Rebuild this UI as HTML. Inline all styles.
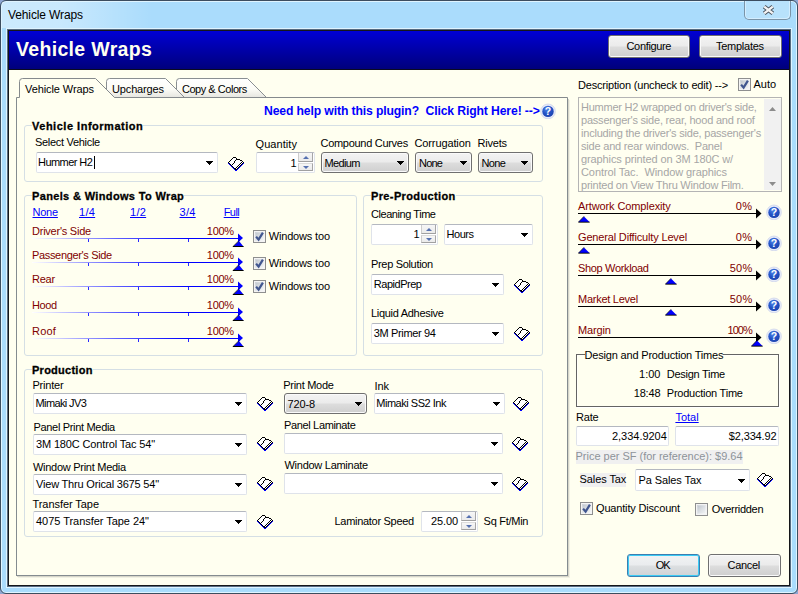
<!DOCTYPE html>
<html><head><meta charset="utf-8"><title>Vehicle Wraps</title>
<style>
html,body{margin:0;padding:0;}
body{width:798px;height:594px;overflow:hidden;background:#8ea6d2;font-family:"Liberation Sans",sans-serif;position:relative;}
#win{position:absolute;left:0;top:0;width:796px;height:592px;border:1px solid #3c4d5f;border-radius:6px;background:#aadcfc;box-shadow:inset 0 0 0 1px #dff4ff;}
#glow{position:absolute;left:2px;top:2px;width:230px;height:26px;background:linear-gradient(90deg,rgba(255,255,255,0.40) 0,rgba(255,255,255,0.36) 60px,rgba(255,255,255,0) 150px);}
#cl{position:absolute;left:8px;top:30px;width:780px;height:554px;border:1px solid #141619;background:#fffff0;box-shadow:0 0 0 1px #566a80,0 0 0 2px #dff4ff;}
#xb{position:absolute;left:744px;top:1px;width:47px;height:19px;border:1px solid #7a94a8;border-top:none;border-radius:0 0 5px 5px;background:#b8e2fc;box-sizing:border-box;box-shadow:inset 1px 0 0 #d4eeff,inset -1px -1px 0 #d4eeff;}
.a,.t,.cb,.dd,.bt,.gb,.ck,.tp,.ta,.fs,.hdr,.sb{position:absolute;box-sizing:border-box;}
.t{white-space:pre;line-height:14px;height:14px;}
.hdr{background:linear-gradient(180deg,#0000d4 0,#0000a8 50%,#00007c 100%);border-bottom:1px solid #0a0a20;}
.cb{background:#fff;border:1px solid #dfe3ea;border-top-color:#b4b8c0;border-radius:2px;}
.dd{border:1px solid #707070;border-radius:3px;background:linear-gradient(180deg,#f3f3f3 0,#ebebeb 48%,#dddddd 52%,#cfcfcf 100%);box-shadow:inset 0 0 0 1px #fafafa;}
.bt{border:1px solid #707070;border-radius:3px;background:linear-gradient(180deg,#f3f3f3 0,#ebebeb 48%,#dddddd 52%,#cfcfcf 100%);box-shadow:inset 0 0 0 1px #fafafa;}
.bt.def{border-color:#3c7fb1;box-shadow:inset 0 0 0 1px #3ccbf4;background:linear-gradient(180deg,#f1f3f4 0,#eaecee 48%,#dcdfe1 52%,#cfd3d6 100%);}
.gb{border:1px solid #d5dfe5;border-radius:3px;}
.tp{border:1px solid #848c90;border-top:none;box-shadow:1px 1px 0 #d6d6ca,2px 2px 0 #f1f1e4;}
.ck{width:13px;height:13px;border:1px solid #8e8f8f;background:linear-gradient(135deg,#b4bbc4 0,#dde1e5 52%,#f9f9f9 100%);box-shadow:inset 0 0 0 1px #f4f4f4,inset 0 0 0 2px rgba(255,255,255,0.25);}
.ta{border:1px solid #b4b4b4;background:#fffff0;}
.sc{position:absolute;right:0;top:1px;bottom:1px;width:17px;background:#f1f1f1;}
.fs{border:1px solid #646464;box-shadow:1px 1px 0 #ffffff, inset 1px 1px 0 #fffffa;}
.sb{width:15px;border:1px solid;border-color:#dcdcdc #a6a6a6 #a0a0a0 #cccccc;background:linear-gradient(180deg,#f6f6f6,#ebebeb);}
</style></head>
<body>
<div id="win"></div>
<div id="glow"></div>
<div id="cl"></div>
<div id="xb"><svg width="13" height="12" viewBox="0 0 13 12" style="position:absolute;left:17px;top:3px"><path d="M2.2 2.6L10.8 9.4M10.8 2.6L2.2 9.4" stroke="#4a525c" stroke-width="4.2" stroke-linecap="butt"/><path d="M2.2 2.6L10.8 9.4M10.8 2.6L2.2 9.4" stroke="#f4f4f4" stroke-width="2.4" stroke-linecap="butt"/></svg></div>
<svg width="0" height="0" style="position:absolute"><defs><g id="bk" shape-rendering="crispEdges"><path d="M5 1h1v1h-1zM6 1h1v1h-1zM7 1h1v1h-1zM4 2h1v1h-1zM5 2h1v1h-1zM6 2h1v1h-1zM7 2h1v1h-1zM3 3h1v1h-1zM4 3h1v1h-1zM5 3h1v1h-1zM6 3h1v1h-1zM8 3h1v1h-1zM9 3h1v1h-1zM10 3h1v1h-1zM11 3h1v1h-1zM2 4h1v1h-1zM3 4h1v1h-1zM4 4h1v1h-1zM5 4h1v1h-1zM7 4h1v1h-1zM8 4h1v1h-1zM9 4h1v1h-1zM10 4h1v1h-1zM11 4h1v1h-1zM12 4h1v1h-1zM13 4h1v1h-1zM1 5h1v1h-1zM2 5h1v1h-1zM3 5h1v1h-1zM4 5h1v1h-1zM5 5h1v1h-1zM7 5h1v1h-1zM8 5h1v1h-1zM9 5h1v1h-1zM10 5h1v1h-1zM11 5h1v1h-1zM12 5h1v1h-1zM14 5h1v1h-1zM2 6h1v1h-1zM3 6h1v1h-1zM4 6h1v1h-1zM6 6h1v1h-1zM7 6h1v1h-1zM8 6h1v1h-1zM9 6h1v1h-1zM10 6h1v1h-1zM11 6h1v1h-1zM13 6h1v1h-1zM3 7h1v1h-1zM5 7h1v1h-1zM6 7h1v1h-1zM7 7h1v1h-1zM8 7h1v1h-1zM9 7h1v1h-1zM10 7h1v1h-1zM12 7h1v1h-1zM4 8h1v1h-1zM5 8h1v1h-1zM6 8h1v1h-1zM7 8h1v1h-1zM8 8h1v1h-1zM9 8h1v1h-1zM11 8h1v1h-1zM5 9h1v1h-1zM6 9h1v1h-1zM7 9h1v1h-1zM8 9h1v1h-1zM10 9h1v1h-1zM6 10h1v1h-1zM7 10h1v1h-1zM9 10h1v1h-1zM8 11h1v1h-1z" fill="#fff"/><path d="M0 6h1v1h-1zM1 7h1v1h-1zM2 8h1v1h-1zM3 9h1v1h-1zM4 10h1v1h-1zM5 11h1v1h-1zM6 12h1v1h-1zM7 13h1v1h-1zM8 13h1v1h-1zM9 12h1v1h-1zM10 11h1v1h-1zM11 10h1v1h-1zM12 9h1v1h-1zM13 8h1v1h-1zM14 7h1v1h-1zM15 6h1v1h-1z" fill="#0000ff"/><path d="M5 0h1v1h-1zM6 0h1v1h-1zM7 0h1v1h-1zM8 1h1v1h-1zM9 2h1v1h-1zM10 2h1v1h-1zM11 2h1v1h-1zM12 3h1v1h-1zM13 3h1v1h-1zM14 4h1v1h-1zM15 5h1v1h-1zM14 6h1v1h-1zM13 7h1v1h-1zM12 8h1v1h-1zM11 9h1v1h-1zM10 10h1v1h-1zM9 11h1v1h-1zM8 12h1v1h-1zM4 1h1v1h-1zM3 2h1v1h-1zM2 3h1v1h-1zM1 4h1v1h-1zM0 5h1v1h-1zM1 6h1v1h-1zM2 7h1v1h-1zM3 8h1v1h-1zM4 9h1v1h-1zM5 10h1v1h-1zM6 11h1v1h-1zM7 12h1v1h-1zM8 2h1v1h-1zM7 3h1v1h-1zM6 4h1v1h-1zM6 5h1v1h-1zM5 6h1v1h-1zM4 7h1v1h-1zM13 5h1v1h-1zM12 6h1v1h-1zM11 7h1v1h-1zM10 8h1v1h-1zM9 9h1v1h-1zM8 10h1v1h-1zM7 11h1v1h-1z" fill="#000"/></g></defs></svg>
<span class="t" style="left:8.00px;top:8.10px;font-size:12px;color:#000;letter-spacing:-0.118px;">Vehicle Wraps</span>
<div class="hdr" style="left:9px;top:31px;width:780px;height:39px;"></div>
<span class="t" style="left:16.00px;top:41.60px;font-size:19.5px;color:#fffff0;letter-spacing:0.331px;font-weight:bold;">Vehicle Wraps</span>
<div class="bt" style="left:608px;top:35px;width:82px;height:23px;"></div>
<span class="t" style="left:626.50px;top:38.60px;font-size:11px;color:#000;letter-spacing:-0.340px;">Configure</span>
<div class="bt" style="left:699px;top:35px;width:83px;height:23px;"></div>
<span class="t" style="left:715.90px;top:38.60px;font-size:11px;color:#000;letter-spacing:-0.239px;">Templates</span>
<svg class="a" style="left:14px;top:76px" width="560" height="24" viewBox="14 76 560 24">
<defs><linearGradient id="tg" x1="0" y1="0" x2="0" y2="1"><stop offset="0" stop-color="#ffffff"/><stop offset="0.55" stop-color="#fcfcf6"/><stop offset="1" stop-color="#e6e6e0"/></linearGradient></defs>
<path d="M176.5 97.5V81.5Q176.500 78.500 179.500 78.500H247.500L266.500 97.500Z" fill="url(#tg)" stroke="#8a8f92"/>
<path d="M106.500 97.500V81.500Q106.500 78.500 109.500 78.500H165.500L184.500 97.500Z" fill="url(#tg)" stroke="#8a8f92"/>
<path d="M16.500 100V97.500H19.500V81.500Q19.500 78.500 22.500 78.500H95.500L114.500 97.500H567.500V100" fill="#fffff0" stroke="#858a8d"/>
</svg>
<div class="tp" style="left:16px;top:98px;width:552px;height:478px;"></div>
<span class="t" style="left:25.00px;top:82.10px;font-size:11px;color:#000;letter-spacing:-0.088px;">Vehicle Wraps</span>
<span class="t" style="left:112.00px;top:82.10px;font-size:11px;color:#000;letter-spacing:-0.140px;">Upcharges</span>
<span class="t" style="left:182.00px;top:82.10px;font-size:11px;color:#000;letter-spacing:-0.473px;">Copy &amp; Colors</span>
<span class="t" style="left:264.00px;top:104.00px;font-size:12.2px;color:#0000ff;letter-spacing:-0.127px;font-weight:bold;">Need help with this plugin?&nbsp; Click Right Here! --&gt;</span>
<svg class="a" style="left:540px;top:103px" width="16" height="16" viewBox="0 0 16 16"><defs><radialGradient id="hg" cx="0.4" cy="0.3" r="0.8"><stop offset="0" stop-color="#4f86e8"/><stop offset="0.5" stop-color="#2453c6"/><stop offset="1" stop-color="#1a3ea8"/></radialGradient></defs><circle cx="8" cy="8.4" r="7.4" fill="#e6eaf8" stroke="#ccd3ea" stroke-width="0.7"/><circle cx="8" cy="8.4" r="5.7" fill="url(#hg)"/><text x="8" y="12" font-family="Liberation Sans" font-weight="bold" font-size="10.5" fill="#fff" text-anchor="middle">?</text></svg>
<div class="gb" style="left:24px;top:125px;width:519px;height:57px;"></div>
<span class="t" style="left:32.00px;top:119.10px;font-size:11px;color:#000;letter-spacing:0.516px;font-weight:bold;-webkit-text-stroke:0.3px;background:#fffff0;">Vehicle Information</span>
<div class="gb" style="left:24px;top:195px;width:333px;height:161px;"></div>
<span class="t" style="left:32.00px;top:189.10px;font-size:11px;color:#000;letter-spacing:0.352px;font-weight:bold;-webkit-text-stroke:0.3px;background:#fffff0;">Panels &amp; Windows To Wrap</span>
<div class="gb" style="left:363px;top:195px;width:180px;height:161px;"></div>
<span class="t" style="left:371.00px;top:189.10px;font-size:11px;color:#000;letter-spacing:0.374px;font-weight:bold;-webkit-text-stroke:0.3px;background:#fffff0;">Pre-Production</span>
<div class="gb" style="left:24px;top:369px;width:519px;height:168px;"></div>
<span class="t" style="left:32.00px;top:363.10px;font-size:11px;color:#000;letter-spacing:0.258px;font-weight:bold;-webkit-text-stroke:0.3px;background:#fffff0;">Production</span>
<span class="t" style="left:35.00px;top:135.10px;font-size:11px;color:#000;letter-spacing:-0.303px;">Select Vehicle</span>
<div class="cb" style="left:36px;top:152px;width:182px;height:21px;"><svg style="position:absolute;right:4px;top:7.5px" width="7" height="4" viewBox="0 0 7 4" shape-rendering="crispEdges"><path d="M0 0H7L3.5 4Z" fill="#000"/></svg></div>
<span class="t" style="left:38.00px;top:155.00px;font-size:11px;color:#000;letter-spacing:-0.563px;">Hummer H2</span>
<div class="a" style="left:94px;top:156px;width:1px;height:13px;background:#000"></div>
<svg class="a" style="left:228px;top:157px" width="16" height="14" viewBox="0 0 16 14"><use href="#bk"/></svg>
<span class="t" style="left:255.50px;top:136.80px;font-size:11px;color:#000;letter-spacing:0.072px;">Quantity</span>
<div class="cb" style="left:256px;top:152px;width:59px;height:21px;"><div class="sb" style="right:1px;top:0px;height:9px;border-top:none"><svg width="6" height="3" viewBox="0 0 6 3" style="position:absolute;left:3.5px;top:3px"><path d="M0 3H6L3 0Z" fill="#5570b0"/></svg></div><div class="sb" style="right:1px;top:10px;height:8px"><svg width="6" height="3" viewBox="0 0 6 3" style="position:absolute;left:3.5px;top:2px"><path d="M0 0H6L3 3Z" fill="#5570b0"/></svg></div></div>
<span class="t" style="left:290.50px;top:155.60px;font-size:11px;color:#000;letter-spacing:0.000px;">1</span>
<span class="t" style="left:320.50px;top:135.60px;font-size:11px;color:#000;letter-spacing:-0.290px;">Compound Curves</span>
<div class="dd" style="left:321px;top:152px;width:88px;height:21px;"><svg style="position:absolute;right:4px;top:8px" width="7" height="4" viewBox="0 0 7 4" shape-rendering="crispEdges"><path d="M0 0H7L3.5 4Z" fill="#000"/></svg></div>
<span class="t" style="left:324.50px;top:155.80px;font-size:11px;color:#000;letter-spacing:-0.658px;">Medium</span>
<span class="t" style="left:414.50px;top:135.60px;font-size:11px;color:#000;letter-spacing:-0.121px;">Corrugation</span>
<div class="dd" style="left:415px;top:152px;width:57px;height:21px;"><svg style="position:absolute;right:4px;top:8px" width="7" height="4" viewBox="0 0 7 4" shape-rendering="crispEdges"><path d="M0 0H7L3.5 4Z" fill="#000"/></svg></div>
<span class="t" style="left:419.00px;top:155.80px;font-size:11px;color:#000;letter-spacing:-0.799px;">None</span>
<span class="t" style="left:477.50px;top:135.60px;font-size:11px;color:#000;letter-spacing:-0.193px;">Rivets</span>
<div class="dd" style="left:478px;top:152px;width:55px;height:21px;"><svg style="position:absolute;right:4px;top:8px" width="7" height="4" viewBox="0 0 7 4" shape-rendering="crispEdges"><path d="M0 0H7L3.5 4Z" fill="#000"/></svg></div>
<span class="t" style="left:481.50px;top:155.80px;font-size:11px;color:#000;letter-spacing:-0.656px;">None</span>
<span class="t" style="left:32.50px;top:205.10px;font-size:11px;color:#0000ff;letter-spacing:-0.227px;text-decoration:underline;">None</span>
<span class="t" style="left:79.00px;top:205.10px;font-size:11px;color:#0000ff;letter-spacing:0.284px;text-decoration:underline;">1/4</span>
<span class="t" style="left:130.00px;top:205.10px;font-size:11px;color:#0000ff;letter-spacing:0.284px;text-decoration:underline;">1/2</span>
<span class="t" style="left:179.50px;top:205.10px;font-size:11px;color:#0000ff;letter-spacing:0.284px;text-decoration:underline;">3/4</span>
<span class="t" style="left:223.70px;top:205.10px;font-size:11px;color:#0000ff;letter-spacing:-0.550px;text-decoration:underline;">Full</span>
<span class="t" style="left:32.00px;top:224.10px;font-size:11px;color:#800000;letter-spacing:-0.240px;">Driver's Side</span>
<span class="t" style="left:206.80px;top:224.10px;font-size:11px;color:#800000;letter-spacing:-0.266px;">100%</span>
<div class="a" style="left:32px;top:238px;width:207px;height:1px;background:linear-gradient(90deg,#ffffff 0,#b8b8ff 18%,#5a5aff 42%,#0000ff 75%)"></div>
<div class="a" style="left:88px;top:239px;width:1px;height:3px;background:#2a2aff"></div>
<div class="a" style="left:138px;top:239px;width:1px;height:3px;background:#2a2aff"></div>
<div class="a" style="left:188px;top:239px;width:1px;height:3px;background:#2a2aff"></div>
<svg class="a" style="left:232px;top:233px" width="12" height="14" viewBox="0 0 12 14"><path d="M6 0.5L11 5L6 9.5Z" fill="#0000ff"/><path d="M7 8L1.2 13.5H11.5Z" fill="#0000ff"/><path d="M0.8 13.5H11.6" stroke="#000" stroke-width="1"/><path d="M7 7.6L1.6 13" stroke="#000" stroke-width="0.8"/></svg>
<span class="t" style="left:32.00px;top:248.10px;font-size:11px;color:#800000;letter-spacing:-0.339px;">Passenger's Side</span>
<span class="t" style="left:206.80px;top:248.10px;font-size:11px;color:#800000;letter-spacing:-0.266px;">100%</span>
<div class="a" style="left:32px;top:262px;width:207px;height:1px;background:linear-gradient(90deg,#ffffff 0,#b8b8ff 18%,#5a5aff 42%,#0000ff 75%)"></div>
<div class="a" style="left:88px;top:263px;width:1px;height:3px;background:#2a2aff"></div>
<div class="a" style="left:138px;top:263px;width:1px;height:3px;background:#2a2aff"></div>
<div class="a" style="left:188px;top:263px;width:1px;height:3px;background:#2a2aff"></div>
<svg class="a" style="left:232px;top:257px" width="12" height="14" viewBox="0 0 12 14"><path d="M6 0.5L11 5L6 9.5Z" fill="#0000ff"/><path d="M7 8L1.2 13.5H11.5Z" fill="#0000ff"/><path d="M0.8 13.5H11.6" stroke="#000" stroke-width="1"/><path d="M7 7.6L1.6 13" stroke="#000" stroke-width="0.8"/></svg>
<span class="t" style="left:32.00px;top:272.10px;font-size:11px;color:#800000;letter-spacing:-0.240px;">Rear</span>
<span class="t" style="left:206.80px;top:272.10px;font-size:11px;color:#800000;letter-spacing:-0.266px;">100%</span>
<div class="a" style="left:32px;top:286px;width:207px;height:1px;background:linear-gradient(90deg,#ffffff 0,#b8b8ff 18%,#5a5aff 42%,#0000ff 75%)"></div>
<div class="a" style="left:88px;top:287px;width:1px;height:3px;background:#2a2aff"></div>
<div class="a" style="left:138px;top:287px;width:1px;height:3px;background:#2a2aff"></div>
<div class="a" style="left:188px;top:287px;width:1px;height:3px;background:#2a2aff"></div>
<svg class="a" style="left:232px;top:281px" width="12" height="14" viewBox="0 0 12 14"><path d="M6 0.5L11 5L6 9.5Z" fill="#0000ff"/><path d="M7 8L1.2 13.5H11.5Z" fill="#0000ff"/><path d="M0.8 13.5H11.6" stroke="#000" stroke-width="1"/><path d="M7 7.6L1.6 13" stroke="#000" stroke-width="0.8"/></svg>
<span class="t" style="left:32.00px;top:298.10px;font-size:11px;color:#800000;letter-spacing:-0.370px;">Hood</span>
<span class="t" style="left:206.80px;top:298.10px;font-size:11px;color:#800000;letter-spacing:-0.266px;">100%</span>
<div class="a" style="left:32px;top:312px;width:207px;height:1px;background:linear-gradient(90deg,#ffffff 0,#b8b8ff 18%,#5a5aff 42%,#0000ff 75%)"></div>
<div class="a" style="left:88px;top:313px;width:1px;height:3px;background:#2a2aff"></div>
<div class="a" style="left:138px;top:313px;width:1px;height:3px;background:#2a2aff"></div>
<div class="a" style="left:188px;top:313px;width:1px;height:3px;background:#2a2aff"></div>
<svg class="a" style="left:232px;top:307px" width="12" height="14" viewBox="0 0 12 14"><path d="M6 0.5L11 5L6 9.5Z" fill="#0000ff"/><path d="M7 8L1.2 13.5H11.5Z" fill="#0000ff"/><path d="M0.8 13.5H11.6" stroke="#000" stroke-width="1"/><path d="M7 7.6L1.6 13" stroke="#000" stroke-width="0.8"/></svg>
<span class="t" style="left:32.00px;top:324.10px;font-size:11px;color:#800000;letter-spacing:0.219px;">Roof</span>
<span class="t" style="left:206.80px;top:324.10px;font-size:11px;color:#800000;letter-spacing:-0.266px;">100%</span>
<div class="a" style="left:32px;top:338px;width:207px;height:1px;background:linear-gradient(90deg,#ffffff 0,#b8b8ff 18%,#5a5aff 42%,#0000ff 75%)"></div>
<div class="a" style="left:88px;top:339px;width:1px;height:3px;background:#2a2aff"></div>
<div class="a" style="left:138px;top:339px;width:1px;height:3px;background:#2a2aff"></div>
<div class="a" style="left:188px;top:339px;width:1px;height:3px;background:#2a2aff"></div>
<svg class="a" style="left:232px;top:333px" width="12" height="14" viewBox="0 0 12 14"><path d="M6 0.5L11 5L6 9.5Z" fill="#0000ff"/><path d="M7 8L1.2 13.5H11.5Z" fill="#0000ff"/><path d="M0.8 13.5H11.6" stroke="#000" stroke-width="1"/><path d="M7 7.6L1.6 13" stroke="#000" stroke-width="0.8"/></svg>
<div class="ck" style="left:253px;top:230px"><svg width="13" height="13" viewBox="0 0 13 13" style="position:absolute;left:-1px;top:-1px"><path d="M3.1 6.6L5.6 9.7L9.9 2.7" stroke="#41568f" stroke-width="2.2" fill="none" stroke-linejoin="miter"/></svg></div>
<span class="t" style="left:268.70px;top:229.40px;font-size:11px;color:#000;letter-spacing:-0.159px;">Windows too</span>
<div class="ck" style="left:253px;top:257px"><svg width="13" height="13" viewBox="0 0 13 13" style="position:absolute;left:-1px;top:-1px"><path d="M3.1 6.6L5.6 9.7L9.9 2.7" stroke="#41568f" stroke-width="2.2" fill="none" stroke-linejoin="miter"/></svg></div>
<span class="t" style="left:268.70px;top:256.40px;font-size:11px;color:#000;letter-spacing:-0.159px;">Windows too</span>
<div class="ck" style="left:253px;top:280px"><svg width="13" height="13" viewBox="0 0 13 13" style="position:absolute;left:-1px;top:-1px"><path d="M3.1 6.6L5.6 9.7L9.9 2.7" stroke="#41568f" stroke-width="2.2" fill="none" stroke-linejoin="miter"/></svg></div>
<span class="t" style="left:268.70px;top:279.40px;font-size:11px;color:#000;letter-spacing:-0.159px;">Windows too</span>
<span class="t" style="left:371.00px;top:206.85px;font-size:11px;color:#000;letter-spacing:-0.445px;">Cleaning Time</span>
<div class="cb" style="left:371px;top:224px;width:67px;height:21px;"><div class="sb" style="right:1px;top:0px;height:9px;border-top:none"><svg width="6" height="3" viewBox="0 0 6 3" style="position:absolute;left:3.5px;top:3px"><path d="M0 3H6L3 0Z" fill="#5570b0"/></svg></div><div class="sb" style="right:1px;top:10px;height:8px"><svg width="6" height="3" viewBox="0 0 6 3" style="position:absolute;left:3.5px;top:2px"><path d="M0 0H6L3 3Z" fill="#5570b0"/></svg></div></div>
<span class="t" style="left:413.50px;top:227.40px;font-size:11px;color:#000;letter-spacing:0.000px;">1</span>
<div class="cb" style="left:444px;top:224px;width:89px;height:21px;"><svg style="position:absolute;right:4px;top:7.5px" width="7" height="4" viewBox="0 0 7 4" shape-rendering="crispEdges"><path d="M0 0H7L3.5 4Z" fill="#000"/></svg></div>
<span class="t" style="left:446.50px;top:227.40px;font-size:11px;color:#000;letter-spacing:-0.465px;">Hours</span>
<span class="t" style="left:371.00px;top:256.85px;font-size:11px;color:#000;letter-spacing:-0.323px;">Prep Solution</span>
<div class="cb" style="left:371px;top:274px;width:133px;height:21px;"><svg style="position:absolute;right:4px;top:7.5px" width="7" height="4" viewBox="0 0 7 4" shape-rendering="crispEdges"><path d="M0 0H7L3.5 4Z" fill="#000"/></svg></div>
<span class="t" style="left:373.75px;top:277.40px;font-size:11px;color:#000;letter-spacing:-0.467px;">RapidPrep</span>
<svg class="a" style="left:514px;top:279px" width="16" height="14" viewBox="0 0 16 14"><use href="#bk"/></svg>
<span class="t" style="left:371.00px;top:305.60px;font-size:11px;color:#000;letter-spacing:-0.297px;">Liquid Adhesive</span>
<div class="cb" style="left:371px;top:323px;width:133px;height:21px;"><svg style="position:absolute;right:4px;top:7.5px" width="7" height="4" viewBox="0 0 7 4" shape-rendering="crispEdges"><path d="M0 0H7L3.5 4Z" fill="#000"/></svg></div>
<span class="t" style="left:373.75px;top:326.40px;font-size:11px;color:#000;letter-spacing:-0.349px;">3M Primer 94</span>
<svg class="a" style="left:514px;top:327px" width="16" height="14" viewBox="0 0 16 14"><use href="#bk"/></svg>
<span class="t" style="left:32.50px;top:378.10px;font-size:11px;color:#000;letter-spacing:-0.215px;">Printer</span>
<div class="cb" style="left:33px;top:393px;width:214px;height:21px;"><svg style="position:absolute;right:4px;top:7.5px" width="7" height="4" viewBox="0 0 7 4" shape-rendering="crispEdges"><path d="M0 0H7L3.5 4Z" fill="#000"/></svg></div>
<span class="t" style="left:35.50px;top:396.10px;font-size:11px;color:#000;letter-spacing:-0.615px;">Mimaki JV3</span>
<svg class="a" style="left:257px;top:397px" width="16" height="14" viewBox="0 0 16 14"><use href="#bk"/></svg>
<span class="t" style="left:283.25px;top:378.10px;font-size:11px;color:#000;letter-spacing:-0.283px;">Print Mode</span>
<div class="dd" style="left:284px;top:393px;width:83px;height:21px;"><svg style="position:absolute;right:4px;top:8px" width="7" height="4" viewBox="0 0 7 4" shape-rendering="crispEdges"><path d="M0 0H7L3.5 4Z" fill="#000"/></svg></div>
<span class="t" style="left:287.50px;top:396.80px;font-size:11px;color:#000;letter-spacing:-0.140px;">720-8</span>
<span class="t" style="left:374.50px;top:378.85px;font-size:11px;color:#000;letter-spacing:-0.069px;">Ink</span>
<div class="cb" style="left:374px;top:393px;width:131px;height:21px;"><svg style="position:absolute;right:4px;top:7.5px" width="7" height="4" viewBox="0 0 7 4" shape-rendering="crispEdges"><path d="M0 0H7L3.5 4Z" fill="#000"/></svg></div>
<span class="t" style="left:376.25px;top:396.10px;font-size:11px;color:#000;letter-spacing:-0.475px;">Mimaki SS2 Ink</span>
<svg class="a" style="left:513px;top:397px" width="16" height="14" viewBox="0 0 16 14"><use href="#bk"/></svg>
<span class="t" style="left:33.50px;top:419.85px;font-size:11px;color:#000;letter-spacing:-0.322px;">Panel Print Media</span>
<div class="cb" style="left:33px;top:434px;width:214px;height:21px;"><svg style="position:absolute;right:4px;top:7.5px" width="7" height="4" viewBox="0 0 7 4" shape-rendering="crispEdges"><path d="M0 0H7L3.5 4Z" fill="#000"/></svg></div>
<span class="t" style="left:36.00px;top:437.40px;font-size:11px;color:#000;letter-spacing:-0.147px;">3M 180C Control Tac 54"</span>
<svg class="a" style="left:257px;top:437px" width="16" height="14" viewBox="0 0 16 14"><use href="#bk"/></svg>
<span class="t" style="left:284.00px;top:418.00px;font-size:11px;color:#000;letter-spacing:-0.347px;">Panel Laminate</span>
<div class="cb" style="left:284px;top:433px;width:219px;height:21px;"><svg style="position:absolute;right:4px;top:7.5px" width="7" height="4" viewBox="0 0 7 4" shape-rendering="crispEdges"><path d="M0 0H7L3.5 4Z" fill="#000"/></svg></div>
<svg class="a" style="left:512px;top:437px" width="16" height="14" viewBox="0 0 16 14"><use href="#bk"/></svg>
<span class="t" style="left:33.00px;top:460.40px;font-size:11px;color:#000;letter-spacing:-0.275px;">Window Print Media</span>
<div class="cb" style="left:33px;top:474px;width:214px;height:21px;"><svg style="position:absolute;right:4px;top:7.5px" width="7" height="4" viewBox="0 0 7 4" shape-rendering="crispEdges"><path d="M0 0H7L3.5 4Z" fill="#000"/></svg></div>
<span class="t" style="left:36.00px;top:476.90px;font-size:11px;color:#000;letter-spacing:-0.188px;">View Thru Orical 3675 54"</span>
<svg class="a" style="left:257px;top:477px" width="16" height="14" viewBox="0 0 16 14"><use href="#bk"/></svg>
<span class="t" style="left:284.50px;top:458.10px;font-size:11px;color:#000;letter-spacing:-0.271px;">Window Laminate</span>
<div class="cb" style="left:284px;top:473px;width:219px;height:21px;"><svg style="position:absolute;right:4px;top:7.5px" width="7" height="4" viewBox="0 0 7 4" shape-rendering="crispEdges"><path d="M0 0H7L3.5 4Z" fill="#000"/></svg></div>
<svg class="a" style="left:512px;top:477px" width="16" height="14" viewBox="0 0 16 14"><use href="#bk"/></svg>
<span class="t" style="left:32.50px;top:497.10px;font-size:11px;color:#000;letter-spacing:-0.060px;">Transfer Tape</span>
<div class="cb" style="left:33px;top:511px;width:214px;height:21px;"><svg style="position:absolute;right:4px;top:7.5px" width="7" height="4" viewBox="0 0 7 4" shape-rendering="crispEdges"><path d="M0 0H7L3.5 4Z" fill="#000"/></svg></div>
<span class="t" style="left:36.00px;top:514.40px;font-size:11px;color:#000;letter-spacing:-0.036px;">4075 Transfer Tape 24"</span>
<svg class="a" style="left:257px;top:515px" width="16" height="14" viewBox="0 0 16 14"><use href="#bk"/></svg>
<span class="t" style="left:334.50px;top:514.10px;font-size:11px;color:#000;letter-spacing:-0.295px;">Laminator Speed</span>
<div class="cb" style="left:421px;top:511px;width:57px;height:21px;"><div class="sb" style="right:1px;top:0px;height:9px;border-top:none"><svg width="6" height="3" viewBox="0 0 6 3" style="position:absolute;left:3.5px;top:3px"><path d="M0 3H6L3 0Z" fill="#5570b0"/></svg></div><div class="sb" style="right:1px;top:10px;height:8px"><svg width="6" height="3" viewBox="0 0 6 3" style="position:absolute;left:3.5px;top:2px"><path d="M0 0H6L3 3Z" fill="#5570b0"/></svg></div></div>
<span class="t" style="left:431.00px;top:514.40px;font-size:11px;color:#000;letter-spacing:-0.116px;">25.00</span>
<span class="t" style="left:483.60px;top:514.10px;font-size:11px;color:#000;letter-spacing:-0.278px;">Sq Ft/Min</span>
<span class="t" style="left:578.00px;top:77.60px;font-size:11px;color:#000;letter-spacing:-0.191px;">Description (uncheck to edit) --&gt;</span>
<div class="ck" style="left:738px;top:78px"><svg width="13" height="13" viewBox="0 0 13 13" style="position:absolute;left:-1px;top:-1px"><path d="M3.1 6.6L5.6 9.7L9.9 2.7" stroke="#41568f" stroke-width="2.2" fill="none" stroke-linejoin="miter"/></svg></div>
<span class="t" style="left:753.50px;top:77.40px;font-size:11px;color:#000;letter-spacing:-0.036px;">Auto</span>
<div class="ta" style="left:578px;top:97px;width:204px;height:95px;"><div class="sc"><svg width="7" height="4" viewBox="0 0 7 4" style="position:absolute;left:5px;top:8px"><path d="M0 4H7L3.5 0Z" fill="#8c8c8c"/></svg><svg width="7" height="4" viewBox="0 0 7 4" style="position:absolute;left:5px;top:83px"><path d="M0 0H7L3.5 4Z" fill="#8c8c8c"/></svg></div></div>
<span class="t" style="left:581.00px;top:99.80px;font-size:11px;color:#a6a6a6;letter-spacing:-0.248px;">Hummer H2 wrapped on driver's side,</span>
<span class="t" style="left:581.00px;top:112.77px;font-size:11px;color:#a6a6a6;letter-spacing:-0.206px;">passenger's side, rear, hood and roof</span>
<span class="t" style="left:581.00px;top:125.74px;font-size:11px;color:#a6a6a6;letter-spacing:-0.208px;">including the driver's side, passenger's</span>
<span class="t" style="left:581.00px;top:138.71px;font-size:11px;color:#a6a6a6;letter-spacing:-0.201px;">side and rear windows.&nbsp; Panel</span>
<span class="t" style="left:581.00px;top:151.68px;font-size:11px;color:#a6a6a6;letter-spacing:-0.112px;">graphics printed on 3M 180C w/</span>
<span class="t" style="left:581.00px;top:164.65px;font-size:11px;color:#a6a6a6;letter-spacing:-0.083px;">Control Tac.&nbsp; Window graphics</span>
<span class="t" style="left:581.00px;top:177.62px;font-size:11px;color:#a6a6a6;letter-spacing:-0.228px;">printed on View Thru Window Film.</span>
<span class="t" style="left:578.00px;top:199.10px;font-size:11px;color:#800000;letter-spacing:-0.114px;">Artwork Complexity</span>
<span class="t" style="left:735.70px;top:199.10px;font-size:11px;color:#800000;letter-spacing:0.468px;">0%</span>
<div class="a" style="left:578px;top:213px;width:179px;height:1px;background:#000"></div>
<svg class="a" style="left:756px;top:208px" width="6" height="11" viewBox="0 0 6 11"><path d="M0 0.5L5.5 5.5L0 10.5Z" fill="#000"/></svg>
<svg class="a" style="left:577.5px;top:215.6px" width="12" height="7" viewBox="0 0 12 7"><path d="M6 0.5L0.5 6H11.5Z" fill="#0000ff"/><path d="M0.3 6.2H11.7" stroke="#000" stroke-width="0.9"/><path d="M6 0.3L0.8 5.8" stroke="#000" stroke-width="0.7"/></svg>
<svg class="a" style="left:766px;top:204px" width="16" height="16" viewBox="0 0 16 16"><defs><radialGradient id="hg" cx="0.4" cy="0.3" r="0.8"><stop offset="0" stop-color="#4f86e8"/><stop offset="0.5" stop-color="#2453c6"/><stop offset="1" stop-color="#1a3ea8"/></radialGradient></defs><circle cx="8" cy="8.4" r="7.4" fill="#e6eaf8" stroke="#ccd3ea" stroke-width="0.7"/><circle cx="8" cy="8.4" r="5.7" fill="url(#hg)"/><text x="8" y="12" font-family="Liberation Sans" font-weight="bold" font-size="10.5" fill="#fff" text-anchor="middle">?</text></svg>
<span class="t" style="left:578.00px;top:230.10px;font-size:11px;color:#800000;letter-spacing:-0.166px;">General Difficulty Level</span>
<span class="t" style="left:735.70px;top:230.10px;font-size:11px;color:#800000;letter-spacing:0.468px;">0%</span>
<div class="a" style="left:578px;top:244px;width:179px;height:1px;background:#000"></div>
<svg class="a" style="left:756px;top:239px" width="6" height="11" viewBox="0 0 6 11"><path d="M0 0.5L5.5 5.5L0 10.5Z" fill="#000"/></svg>
<svg class="a" style="left:577.5px;top:246.6px" width="12" height="7" viewBox="0 0 12 7"><path d="M6 0.5L0.5 6H11.5Z" fill="#0000ff"/><path d="M0.3 6.2H11.7" stroke="#000" stroke-width="0.9"/><path d="M6 0.3L0.8 5.8" stroke="#000" stroke-width="0.7"/></svg>
<svg class="a" style="left:766px;top:235px" width="16" height="16" viewBox="0 0 16 16"><defs><radialGradient id="hg" cx="0.4" cy="0.3" r="0.8"><stop offset="0" stop-color="#4f86e8"/><stop offset="0.5" stop-color="#2453c6"/><stop offset="1" stop-color="#1a3ea8"/></radialGradient></defs><circle cx="8" cy="8.4" r="7.4" fill="#e6eaf8" stroke="#ccd3ea" stroke-width="0.7"/><circle cx="8" cy="8.4" r="5.7" fill="url(#hg)"/><text x="8" y="12" font-family="Liberation Sans" font-weight="bold" font-size="10.5" fill="#fff" text-anchor="middle">?</text></svg>
<span class="t" style="left:578.00px;top:261.10px;font-size:11px;color:#800000;letter-spacing:-0.340px;">Shop Workload</span>
<span class="t" style="left:729.75px;top:261.10px;font-size:11px;color:#800000;letter-spacing:0.214px;">50%</span>
<div class="a" style="left:578px;top:275px;width:179px;height:1px;background:#000"></div>
<svg class="a" style="left:756px;top:270px" width="6" height="11" viewBox="0 0 6 11"><path d="M0 0.5L5.5 5.5L0 10.5Z" fill="#000"/></svg>
<svg class="a" style="left:664.5px;top:277.6px" width="12" height="7" viewBox="0 0 12 7"><path d="M6 0.5L0.5 6H11.5Z" fill="#0000ff"/><path d="M0.3 6.2H11.7" stroke="#000" stroke-width="0.9"/><path d="M6 0.3L0.8 5.8" stroke="#000" stroke-width="0.7"/></svg>
<svg class="a" style="left:766px;top:266px" width="16" height="16" viewBox="0 0 16 16"><defs><radialGradient id="hg" cx="0.4" cy="0.3" r="0.8"><stop offset="0" stop-color="#4f86e8"/><stop offset="0.5" stop-color="#2453c6"/><stop offset="1" stop-color="#1a3ea8"/></radialGradient></defs><circle cx="8" cy="8.4" r="7.4" fill="#e6eaf8" stroke="#ccd3ea" stroke-width="0.7"/><circle cx="8" cy="8.4" r="5.7" fill="url(#hg)"/><text x="8" y="12" font-family="Liberation Sans" font-weight="bold" font-size="10.5" fill="#fff" text-anchor="middle">?</text></svg>
<span class="t" style="left:578.00px;top:292.10px;font-size:11px;color:#800000;letter-spacing:-0.258px;">Market Level</span>
<span class="t" style="left:729.75px;top:292.10px;font-size:11px;color:#800000;letter-spacing:0.214px;">50%</span>
<div class="a" style="left:578px;top:306px;width:179px;height:1px;background:#000"></div>
<svg class="a" style="left:756px;top:301px" width="6" height="11" viewBox="0 0 6 11"><path d="M0 0.5L5.5 5.5L0 10.5Z" fill="#000"/></svg>
<svg class="a" style="left:664.5px;top:308.6px" width="12" height="7" viewBox="0 0 12 7"><path d="M6 0.5L0.5 6H11.5Z" fill="#0000ff"/><path d="M0.3 6.2H11.7" stroke="#000" stroke-width="0.9"/><path d="M6 0.3L0.8 5.8" stroke="#000" stroke-width="0.7"/></svg>
<svg class="a" style="left:766px;top:297px" width="16" height="16" viewBox="0 0 16 16"><defs><radialGradient id="hg" cx="0.4" cy="0.3" r="0.8"><stop offset="0" stop-color="#4f86e8"/><stop offset="0.5" stop-color="#2453c6"/><stop offset="1" stop-color="#1a3ea8"/></radialGradient></defs><circle cx="8" cy="8.4" r="7.4" fill="#e6eaf8" stroke="#ccd3ea" stroke-width="0.7"/><circle cx="8" cy="8.4" r="5.7" fill="url(#hg)"/><text x="8" y="12" font-family="Liberation Sans" font-weight="bold" font-size="10.5" fill="#fff" text-anchor="middle">?</text></svg>
<span class="t" style="left:578.00px;top:323.10px;font-size:11px;color:#800000;letter-spacing:-0.167px;">Margin</span>
<span class="t" style="left:727.60px;top:323.10px;font-size:11px;color:#800000;letter-spacing:-0.981px;">100%</span>
<div class="a" style="left:578px;top:337px;width:179px;height:1px;background:#000"></div>
<svg class="a" style="left:756px;top:332px" width="6" height="11" viewBox="0 0 6 11"><path d="M0 0.5L5.5 5.5L0 10.5Z" fill="#000"/></svg>
<svg class="a" style="left:750.5px;top:339.6px" width="12" height="7" viewBox="0 0 12 7"><path d="M6 0.5L0.5 6H11.5Z" fill="#0000ff"/><path d="M0.3 6.2H11.7" stroke="#000" stroke-width="0.9"/><path d="M6 0.3L0.8 5.8" stroke="#000" stroke-width="0.7"/></svg>
<svg class="a" style="left:766px;top:328px" width="16" height="16" viewBox="0 0 16 16"><defs><radialGradient id="hg" cx="0.4" cy="0.3" r="0.8"><stop offset="0" stop-color="#4f86e8"/><stop offset="0.5" stop-color="#2453c6"/><stop offset="1" stop-color="#1a3ea8"/></radialGradient></defs><circle cx="8" cy="8.4" r="7.4" fill="#e6eaf8" stroke="#ccd3ea" stroke-width="0.7"/><circle cx="8" cy="8.4" r="5.7" fill="url(#hg)"/><text x="8" y="12" font-family="Liberation Sans" font-weight="bold" font-size="10.5" fill="#fff" text-anchor="middle">?</text></svg>
<div class="fs" style="left:576px;top:354px;width:203px;height:53px;"></div>
<span class="t" style="left:584.50px;top:347.70px;font-size:11px;color:#000;letter-spacing:-0.180px;background:#fffff0;">Design and Production Times</span>
<span class="t" style="left:639.00px;top:366.80px;font-size:11px;color:#000;letter-spacing:0.027px;">1:00</span>
<span class="t" style="left:666.80px;top:366.80px;font-size:11px;color:#000;letter-spacing:-0.279px;">Design Time</span>
<span class="t" style="left:633.70px;top:385.85px;font-size:11px;color:#000;letter-spacing:-0.161px;">18:48</span>
<span class="t" style="left:666.80px;top:385.85px;font-size:11px;color:#000;letter-spacing:-0.240px;">Production Time</span>
<span class="t" style="left:576.00px;top:410.00px;font-size:11px;color:#000;letter-spacing:-0.181px;">Rate</span>
<span class="t" style="left:675.40px;top:410.00px;font-size:11px;color:#0000ff;letter-spacing:0.015px;text-decoration:underline;">Total</span>
<div class="cb" style="left:576px;top:426px;width:93px;height:20px;"></div>
<span class="t" style="left:612.00px;top:429.40px;font-size:11px;color:#000;letter-spacing:-0.026px;">2,334.9204</span>
<div class="cb" style="left:675px;top:426px;width:104px;height:20px;"></div>
<span class="t" style="left:728.80px;top:429.40px;font-size:11px;color:#000;letter-spacing:-0.145px;">$2,334.92</span>
<span class="t" style="left:575.50px;top:449.30px;font-size:11px;color:#8d9399;letter-spacing:-0.015px;background:#f0f0f0;line-height:12px;margin-top:1px;">Price per SF (for reference): $9.64</span>
<span class="t" style="left:579.60px;top:472.60px;font-size:11px;color:#000;letter-spacing:-0.093px;background:#f0f0f0;line-height:13px;">Sales Tax</span>
<div class="cb" style="left:635px;top:469px;width:115px;height:22px;"><svg style="position:absolute;right:4px;top:8.5px" width="7" height="4" viewBox="0 0 7 4" shape-rendering="crispEdges"><path d="M0 0H7L3.5 4Z" fill="#000"/></svg></div>
<span class="t" style="left:638.40px;top:472.60px;font-size:11px;color:#000;letter-spacing:-0.087px;">Pa Sales Tax</span>
<svg class="a" style="left:757px;top:473px" width="16" height="14" viewBox="0 0 16 14"><use href="#bk"/></svg>
<div class="ck" style="left:580px;top:502px"><svg width="13" height="13" viewBox="0 0 13 13" style="position:absolute;left:-1px;top:-1px"><path d="M3.1 6.6L5.6 9.7L9.9 2.7" stroke="#41568f" stroke-width="2.2" fill="none" stroke-linejoin="miter"/></svg></div>
<span class="t" style="left:596.00px;top:501.00px;font-size:11px;color:#000;letter-spacing:-0.171px;">Quantity Discount</span>
<div class="ck" style="left:695px;top:503px"></div>
<span class="t" style="left:711.80px;top:502.00px;font-size:11px;color:#000;letter-spacing:-0.296px;">Overridden</span>
<div class="bt def" style="left:627px;top:554px;width:73px;height:23px;"></div>
<span class="t" style="left:655.70px;top:557.80px;font-size:11px;color:#000;letter-spacing:-1.062px;">OK</span>
<div class="bt" style="left:708px;top:554px;width:73px;height:23px;"></div>
<span class="t" style="left:727.50px;top:557.80px;font-size:11px;color:#000;letter-spacing:-0.316px;">Cancel</span>
</body></html>
